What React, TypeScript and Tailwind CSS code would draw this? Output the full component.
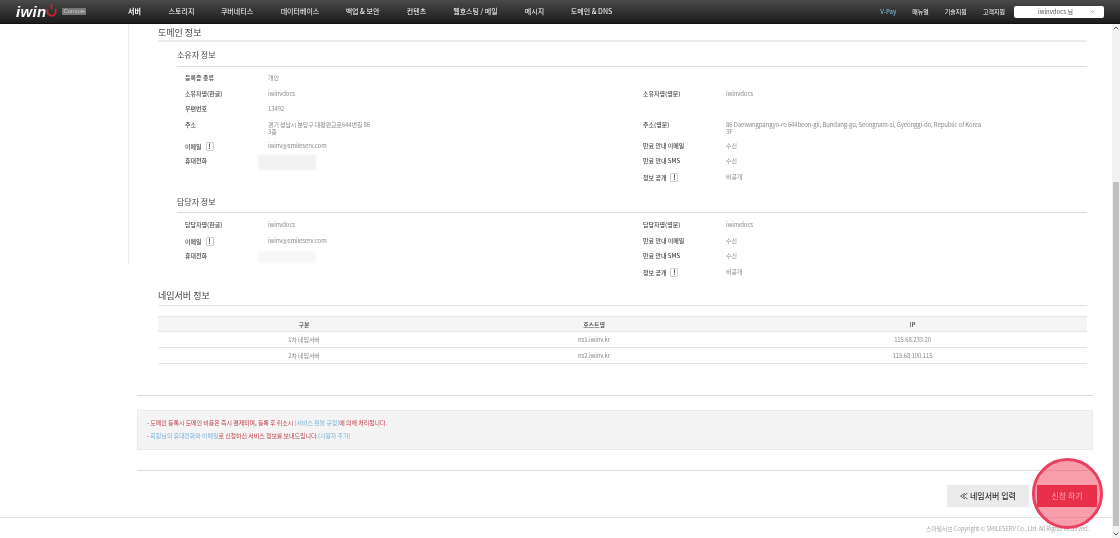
import type { ReactNode } from "react";
import { ChevronDown, ChevronUp } from "lucide-react";

const NAV = [
  { label: "서버", width: "w-[47px]", bold: true },
  { label: "스토리지", width: "w-[47px]" },
  { label: "쿠버네티스", width: "w-[64px]" },
  { label: "데이터베이스", width: "w-[62px]" },
  { label: "백업 & 보안", width: "w-[63px]" },
  { label: "컨텐츠", width: "w-[45px]" },
  { label: "웹호스팅 / 메일", width: "w-[73px]" },
  { label: "메시지", width: "w-[45px]" },
  { label: "도메인 & DNS", width: "w-[69px]" },
];

function Notice() {
  return (
    <span className="ml-[4px] inline-flex h-[9px] w-[8px] items-center justify-center rounded-[1px] border border-[#cfcfcf] text-[7px] font-bold leading-none text-[#444]">
      !
    </span>
  );
}

function Row({
  label,
  value,
  rightLabel,
  rightValue,
  tall,
}: {
  label?: ReactNode;
  value?: ReactNode;
  rightLabel?: ReactNode;
  rightValue?: ReactNode;
  tall?: boolean;
}) {
  return (
    <div
      className={`grid grid-cols-[83px_375px_83px_1fr] pl-[8px] leading-[7px] ${
        tall ? "h-[21px]" : "h-[15.5px]"
      }`}
    >
      <div className="font-medium text-[#444]">{label}</div>
      <div className="tracking-[-0.12px] text-[#8a8a8a]">{value}</div>
      <div className="font-medium text-[#444]">{rightLabel}</div>
      <div className="tracking-[-0.12px] text-[#8a8a8a]">{rightValue}</div>
    </div>
  );
}

function Phone({ className }: { className: string }) {
  return <div className={`-ml-[10px] w-[58px] bg-[#f1f1f1] blur-[1px] ${className}`} />;
}

export default function App() {
  return (
    <div
      className="relative flex h-[538px] w-[1120px] flex-col overflow-hidden bg-white text-[6px] blur-[0.35px]"
      style={{ fontFamily: '"Noto Sans CJK KR", "Noto Sans", sans-serif' }}
    >
      {/* Top bar */}
      <header className="flex h-[24px] shrink-0 items-center border-b border-[#111] bg-gradient-to-b from-[#4a4a4a] to-[#1c1c1c] text-[7px] text-white">
        <div className="flex w-[111px] items-center pl-[16px]">
          <span
            className="text-[15px] font-bold italic leading-none tracking-[0.3px]"
            style={{ fontFamily: '"Liberation Sans", sans-serif' }}
          >
            iwin
          </span>
          <svg viewBox="0 0 11 13" className="-mt-[3px] h-[13px] w-[11px]" fill="none" stroke="#d2222d" strokeWidth="1.7" strokeLinecap="round">
            <path d="M1.5 5.5c-.4 2.5.5 6 4 6.3 3.2.2 4.6-2.6 4.2-6.3" />
            <path d="M5.5 1v3.4" />
          </svg>
          <span
            className="ml-[5px] bg-[#777] px-[1px] text-[6px] leading-[7px] text-[#ccc]"
            style={{ fontFamily: '"Liberation Sans", sans-serif' }}
          >
            Console
          </span>
        </div>
        <nav className="flex">
          {NAV.map((item) => (
            <span key={item.label} className={`${item.width} text-center ${item.bold ? "font-bold" : ""}`}>
              {item.label}
            </span>
          ))}
        </nav>
        <div className="ml-auto flex items-center pr-[16px] text-[6px]">
          <span className="font-medium text-[#7fb2d6]">V-Pay</span>
          <span className="ml-[16px]">매뉴얼</span>
          <span className="ml-[16px]">기술지원</span>
          <span className="ml-[16px]">고객지원</span>
          <div className="ml-[9px] flex h-[12px] w-[90px] items-center rounded-[2px] bg-white pl-[24px] pr-[8px] text-[#555]">
            iwinvdocs 님
            <ChevronDown className="ml-auto h-[7px] w-[7px]" strokeWidth={1.5} />
          </div>
        </div>
      </header>

      <div className="flex min-h-0 flex-1">
        <div className="flex min-w-0 flex-1 flex-col">
          <div className="flex flex-1">
            <aside className="h-[240px] w-[129px] shrink-0 border-r border-[#eeeeee]" />
            <main className="min-w-0 flex-1 pl-[8px] pr-[19px]">
              <div className="ml-[21px] mr-[6px]">
                <h2 className="flex h-[18px] items-center border-b-2 border-[#ececec] text-[9px] leading-none text-[#444]">
                  도메인 정보
                </h2>

                <div className="ml-[19px]">
                  <h3 className="flex h-[25px] items-end border-b border-[#dddddd] pb-[7px] text-[8px] leading-none text-[#444]">
                    소유자 정보
                  </h3>
                  <div className="pt-[7px]">
                    <Row label="등록증 종류" value="개인" />
                    <Row label="소유자명(한글)" value="iwinvdocs" rightLabel="소유자명(영문)" rightValue="iwinvdocs" />
                    <Row label="우편번호" value="13492" />
                    <Row
                      tall
                      label="주소"
                      value={
                        <>
                          경기 성남시 분당구 대왕판교로644번길 86
                          <br />
                          3층
                        </>
                      }
                      rightLabel="주소(영문)"
                      rightValue={
                        <>
                          86 Daewangpangyo-ro 644beon-gil, Bundang-gu, Seongnam-si, Gyeonggi-do, Republic of Korea
                          <br />
                          3F
                        </>
                      }
                    />
                    <Row
                      label={
                        <>
                          이메일
                          <Notice />
                        </>
                      }
                      value="iwinv@smileserv.com"
                      rightLabel="만료 안내 이메일"
                      rightValue="수신"
                    />
                    <Row label="휴대전화" value={<Phone className="h-[15px] -mt-[2px]" />} rightLabel="만료 안내 SMS" rightValue="수신" />
                    <Row
                      rightLabel={
                        <>
                          정보 공개
                          <Notice />
                        </>
                      }
                      rightValue="비공개"
                    />
                  </div>

                  <h3 className="flex h-[25px] items-end border-b border-[#dddddd] pb-[6px] text-[8px] leading-none text-[#444]">
                    담당자 정보
                  </h3>
                  <div className="pt-[8px]">
                    <Row label="담당자명(한글)" value="iwinvdocs" rightLabel="담당자명(영문)" rightValue="iwinvdocs" />
                    <Row
                      label={
                        <>
                          이메일
                          <Notice />
                        </>
                      }
                      value="iwinv@smileserv.com"
                      rightLabel="만료 안내 이메일"
                      rightValue="수신"
                    />
                    <Row label="휴대전화" value={<Phone className="h-[12px] -mt-[1px] opacity-50" />} rightLabel="만료 안내 SMS" rightValue="수신" />
                    <Row
                      rightLabel={
                        <>
                          정보 공개
                          <Notice />
                        </>
                      }
                      rightValue="비공개"
                    />
                  </div>
                </div>

                <h2 className="mt-[3px] flex h-[20px] items-center border-b border-[#e5e5e5] text-[9px] leading-none text-[#444]">
                  네임서버 정보
                </h2>
                <div className="mt-[10px] text-center leading-[15px] tracking-[-0.12px] text-[#8a8a8a]">
                  <div className="grid h-[16px] grid-cols-[292px_288px_1fr] border-y border-[#e6e6e6] bg-[#f5f5f5] font-medium text-[#444]">
                    <span>구분</span>
                    <span>호스트명</span>
                    <span>IP</span>
                  </div>
                  <div className="grid h-[16px] grid-cols-[292px_288px_1fr] border-b border-[#e6e6e6]">
                    <span>1차 네임서버</span>
                    <span>ns1.iwinv.kr</span>
                    <span>115.68.233.20</span>
                  </div>
                  <div className="grid h-[16px] grid-cols-[292px_288px_1fr] border-b border-[#e6e6e6]">
                    <span>2차 네임서버</span>
                    <span>ns2.iwinv.kr</span>
                    <span>115.68.100.115</span>
                  </div>
                </div>
              </div>

              <div className="mt-[31px] border-t border-[#dddddd]" />
              <div className="mt-[14px] flex h-[40px] flex-col gap-[6px] border border-[#eaeaea] bg-[#f4f4f4] pl-[9px] pt-[8px] leading-[7px] tracking-[-0.06px] text-[#c0434f]">
                <p>
                  - 도메인 등록시 도메인 비용은 즉시 결제되며, 등록 후 취소시{" "}
                  <span className="text-[#7fb2d6]">[서비스 환불 규정]</span>에 의해 처리됩니다.
                </p>
                <p>
                  - <span className="text-[#7fb2d6]">회원님의 휴대전화와 이메일</span>로 신청하신 서비스 정보를 보내드립니다.
                  <span className="text-[#7fb2d6]">(사용자 추가)</span>
                </p>
              </div>
              <div className="mt-[20px] border-t border-[#dddddd]" />
              <div className="mt-[14px] flex justify-end gap-[8px]">
                <button className="flex h-[22px] w-[82px] items-center justify-center bg-[#ebebeb] text-[8px] font-medium text-[#333]">
                  ≪ 네임서버 입력
                </button>
                <button className="-mr-[4px] flex h-[22px] w-[60px] items-center justify-center bg-[#e0243a] text-[8px] text-white">
                  신청 하기
                </button>
              </div>
            </main>
          </div>
          <footer className="flex h-[21px] shrink-0 items-center justify-end border-t border-[#e5e5e5] pr-[23px] tracking-[-0.22px] text-[#aaaaaa]">
            스마일서브 Copyright © SMILESERV Co., Ltd. All Rights Reserved.
          </footer>
        </div>

        {/* Scrollbar */}
        <div className="flex w-[8px] shrink-0 flex-col items-center bg-[#f1f1f1] text-[#555]">
          <ChevronUp className="h-[8px] w-[8px]" strokeWidth={3} />
          <div className="mt-[150px] h-[344px] w-[6px] bg-[#c1c1c1]" />
          <ChevronDown className="mt-auto h-[8px] w-[8px]" strokeWidth={3} />
        </div>
      </div>

      {/* Click highlight */}
      <div className="absolute left-[1032px] top-[458px] h-[71px] w-[71px] rounded-full border-[3px] border-[#e8405e] bg-[#f03c5a]/50" />
    </div>
  );
}
